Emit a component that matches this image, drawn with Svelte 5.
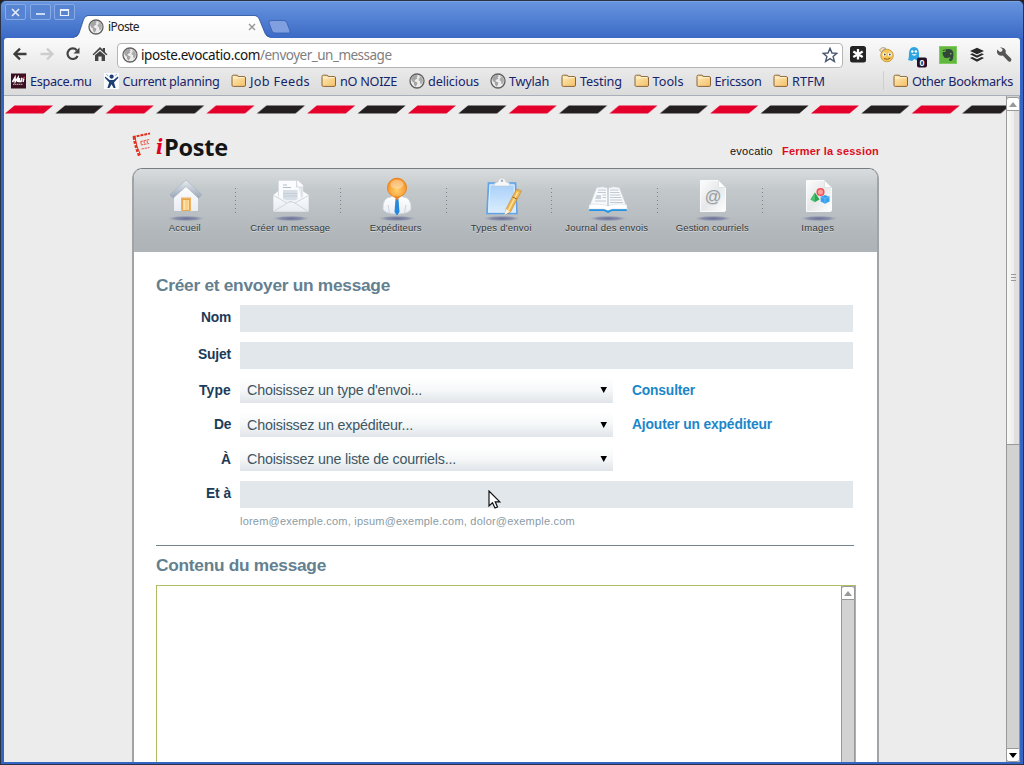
<script>
  // Spreads the letters of a label so that it takes the given width.
  function fit(node, width) {
    const n = [...node.textContent].length;
    const natural = node.getBoundingClientRect().width;
    node.style.letterSpacing = (width - natural) / n + 'px';
  }

  const bookmarks = [
    { icon: 'mu', label: 'Espace.mu', w: 61.5, slot: 92.5 },
    { icon: 'man', label: 'Current planning', w: 97, slot: 127.5 },
    { icon: 'folder', label: 'Job Feeds', w: 60, slot: 90 },
    { icon: 'folder', label: 'nO NOIZE', w: 57, slot: 88 },
    { icon: 'globe', label: 'delicious', w: 51, slot: 81 },
    { icon: 'globe', label: 'Twylah', w: 40, slot: 71 },
    { icon: 'folder', label: 'Testing', w: 42, slot: 72.5 },
    { icon: 'folder', label: 'Tools', w: 31, slot: 62 },
    { icon: 'folder', label: 'Ericsson', w: 47, slot: 77.5 },
    { icon: 'folder', label: 'RTFM', w: 33, slot: 60 }
  ];

  const nav = [
    { icon: 'home', label: 'Accueil', w: 32 },
    { icon: 'mail', label: 'Créer un message', w: 80 },
    { icon: 'person', label: 'Expéditeurs', w: 52 },
    { icon: 'clip', label: "Types d'envoi", w: 61 },
    { icon: 'book', label: 'Journal des envois', w: 83 },
    { icon: 'at', label: 'Gestion courriels', w: 73 },
    { icon: 'shapes', label: 'Images', w: 33 }
  ];

  const selects = [
    { label: 'Type', lw: 32, text: "Choisissez un type d'envoi...", w: 175, link: 'Consulter', kw: 63 },
    { label: 'De', lw: 17, text: 'Choisissez un expéditeur...', w: 166, link: 'Ajouter un expéditeur', kw: 140 },
    { label: 'À', lw: 10, text: 'Choisissez une liste de courriels...', w: 209 }
  ];
</script>

{#snippet globe()}
  <svg width="16" height="16" viewBox="0 0 16 16">
    <circle cx="8" cy="8" r="7" fill="#ececec" stroke="#606060" stroke-width="1.3" />
    <path d="M2 6 L4 3 L7 1.8 L9 3 L7.5 4.2 L8.5 5.4 L7 6.2 L5.4 7.4 L6 8.6 L8.4 9.4 L8 11.6 L6.6 13.8 L5.2 12 L4.8 9.6 L3 8.2Z" fill="#a4a4a4" />
    <path d="M10 3 L12.6 4 L14 6.4 L13.6 9.6 L12 11.6 L11 9.8 L11.2 8.2 L9.6 7.4 L9.8 5.6 L11 5Z" fill="#acacac" />
  </svg>
{/snippet}

{#snippet bmIcon(kind)}
  {#if kind === 'folder'}
    <svg width="16" height="16" viewBox="0 0 16 16">
      <defs><linearGradient id="fold" x1="0" y1="0" x2="1" y2="1"><stop offset="0" stop-color="#fdebb8" /><stop offset="1" stop-color="#f5bf66" /></linearGradient></defs>
      <path d="M1 3.5 Q1 2.2 2.3 2.2 H6 Q7 2.2 7.2 3.6 H13.2 Q14.5 3.6 14.5 5 V12.2 Q14.5 13.4 13.2 13.4 H2.3 Q1 13.4 1 12.2Z" fill="url(#fold)" stroke="#8a6438" stroke-width="1" />
      <path d="M2 5 H6.5 L7.5 4.6 H13.4" fill="none" stroke="#fff6d8" />
    </svg>
  {:else if kind === 'globe'}
    {@render globe()}
  {:else if kind === 'mu'}
    <svg width="16" height="16" viewBox="0 0 16 16">
      <rect x="0" y="0.5" width="15" height="15" fill="#3a1020" />
      <path d="M1.5 9 L4 4.6 L4.2 8.6 L7 4.6 L6.6 9 M8.6 4.8 L7.8 8.4 H10 L11 4.8" stroke="#fff" stroke-width="1.6" fill="none" />
      <path d="M12.8 5.5 L12 9" stroke="#fff" stroke-width="1.5" />
      <path d="M12.3 4.5 H14" stroke="#e33a50" stroke-width="1.4" />
      <path d="M2 11.3 H12" stroke="#b59aa2" stroke-width="1.2" stroke-dasharray="1.5 .5" />
    </svg>
  {:else}
    <svg width="16" height="16" viewBox="0 0 16 16">
      <rect width="15" height="16" fill="#fafcff" />
      <circle cx="7.6" cy="3.6" r="2.1" fill="#1c3e73" />
      <path d="M1.2 3.6 L5.6 7 H9.6 L13.8 3.6 L14.4 4.8 L10 9.4 L11.6 15 H9.6 L7.6 11.2 L5.4 15 H3.4 L5.2 9.4 L0.8 4.8Z" fill="#1c3e73" />
      <path d="M2.6 1.4 L4 2.8 M12.6 1.2 L11.2 2.6" stroke="#5f83b5" />
    </svg>
  {/if}
{/snippet}

{#snippet navIcon(kind)}
  <svg class="navicon" width="44" height="44" viewBox="0 0 44 44">
    <ellipse cx="22" cy="39.5" rx="19" ry="2.8" fill="url(#shade)" />
    {#if kind === 'home'}
      <path d="M10 16 L22 5 L34 16 V31 Q34 32 33 32 H11 Q10 32 10 31Z" fill="url(#paper)" />
      <path d="M22 1 L38 15.8 L34.5 19.3 L22 7.5 L9 19.3 L5.8 15.8Z" fill="url(#roof)" stroke="#a4afbd" stroke-width=".6" />
      <rect x="17" y="18.5" width="10" height="13.2" fill="#f0b160" />
      <rect x="18.7" y="20.4" width="6.6" height="11.2" fill="#ffe3ac" stroke="#e09a3e" stroke-width=".8" />
      <path d="M22.5 21 V31" stroke="#f8cd85" stroke-width="2.5" />
    {:else if kind === 'mail'}
      <path d="M9.5 1.5 H29 L34 6 V22 H9.5Z" fill="#fbfcfd" stroke="#d3d8de" stroke-width=".6" />
      <path d="M27.5 1.5 V8 H33 V22" fill="#e8ecf1" stroke="#c8cfd8" stroke-width=".7" />
      <path d="M14 6 H18 M14 8.5 H22" stroke="#b5bcc7" />
      <rect x="14" y="11" width="14.5" height="10" fill="#d8dee6" />
      <path d="M14 14.5 H28.5 M14 17 H28.5" stroke="#c1c9d4" stroke-width=".8" />
      <path d="M4.5 16 L9 12.5 V18 L21.5 23 L34 18 V12.5 L39.5 16 V31.5 Q39.5 32.5 38.5 32.5 H5.5 Q4.5 32.5 4.5 31.5Z" fill="url(#paper)" stroke="#e8ecf0" stroke-width=".5" />
      <path d="M4.5 16.5 L18 24 M39.5 16.5 L26 24 M5.5 32 L19 23.5 Q22 22 25 23.5 L38.5 32" fill="none" stroke="#cbd2da" stroke-width=".9" />
    {:else if kind === 'person'}
      <path d="M8 30 Q7.5 18.5 16 18 H28 Q36.5 18.5 36 30 Q35 34.5 22 35 Q9 34.5 8 30Z" fill="url(#paper)" stroke="#cdd4df" stroke-width=".7" />
      <path d="M13 26 L14.5 33.5 M31 26 L29.5 33.5" stroke="#cfd6e1" />
      <path d="M16 18 L22 25 L28 18 L25 16 H19Z" fill="#fff" />
      <path d="M20.5 20 H23.5 L24.5 33 L22 36.5 L19.5 33Z" fill="#2688dc" />
      <path d="M18.5 17 L22 21.5 L25.5 17Z" fill="#ef8120" />
      <circle cx="22" cy="8.7" r="9.5" fill="url(#head)" stroke="#e9801c" stroke-width="1" />
      <ellipse cx="22" cy="5.4" rx="6.5" ry="4.5" fill="#fff" opacity=".35" />
    {:else if kind === 'clip'}
      <path d="M8.5 4 H35.5 L37 34.5 H7Z" fill="url(#board)" stroke="#5fa2e6" stroke-width="1.6" />
      <path d="M10 6 H34 L35.3 32.8 H8.6Z" fill="none" stroke="#dceeff" stroke-width="1" />
      <path d="M14 7 Q14 3 18 3 Q18.5 -1 22 -1 Q25.5 -1 26 3 Q30 3 30 7Z" fill="#f6f7f8" stroke="#c5cad0" stroke-width=".6" />
      <circle cx="22" cy="1.8" r="1.2" fill="#a3acb5" />
      <path d="M36.5 10 L41.5 12 L30.5 33 L25 35.5 L26 30Z" fill="#f1b550" stroke="#c08a38" stroke-width=".6" />
      <path d="M38 13 L28.5 31" stroke="#ffe4a4" stroke-width="1.5" />
      <path d="M26 30 L30 32.5 L24.5 36Z" fill="#fff4e0" />
      <path d="M32.5 18 L37 20" stroke="#96651f" />
    {:else if kind === 'book'}
      <path d="M2.5 28 L3.5 32 H18 L22 34 L26 32 H40.5 L41.5 28Z" fill="#2093e4" />
      <path d="M10.5 8.5 Q17 7 22 9 Q27 7 33.5 8.5 L41 28.5 Q30 26.5 22 29.5 Q14 26.5 3 28.5Z" fill="#f7f9fb" stroke="#c6cdd5" stroke-width=".7" />
      <path d="M3.5 25.5 Q14 24 22 27 Q30 24 40.5 25.5 L41.5 30 H26 L22 31.5 L18 30 H2.5Z" fill="#fff" stroke="#c9d0d8" stroke-width=".5" />
      <path d="M22 9 V27" stroke="#bac2cc" stroke-width="1.3" />
      <path d="M12 11 H20 M11.5 13.5 H20 M16.5 16 H20 M16.5 18.5 H20 M9 22 H20 M24 11 H32.5 M24 13.5 H33.5 M24 16 H34.5 M24 18.5 H35.5 M24 21 H36 M24 23.5 H37" stroke="#c3cad4" />
      <path d="M10.5 16 H15 V20 H9.2Z" fill="#ccd3db" />
    {:else}
      <path d="M9.5 1.5 H27.5 L34.5 8.5 V31 Q34.5 32.5 33 32.5 H9.5Z" fill="url(#sheet)" stroke="#f9fafb" stroke-width="1" />
      <path d="M27.5 1.5 V8.5 H34.5Z" fill="#fff" stroke="#dcdfe2" stroke-width=".8" />
      {#if kind === 'at'}
        <text x="22" y="22.5" text-anchor="middle" font-family="Liberation Sans" font-size="16.5" fill="#989da2">@</text>
      {:else}
        <circle cx="23.5" cy="13" r="3.3" fill="#ff9c9c" stroke="#ee5054" stroke-width="1.5" />
        <path d="M18 13.5 L22.5 20.5 L18 23 L13.5 20.5Z" fill="#2da452" />
        <path d="M18 13.5 L18 23 L13.5 20.5Z" fill="#4fc070" />
        <path d="M28 16 L32.5 17.7 V22.5 L28 24.8 L23.7 22.5 V17.7Z" fill="#35a0f2" />
        <path d="M23.7 17.7 L28 19.5 L32.5 17.7 M28 19.5 V24.5" stroke="#79c0f8" fill="none" stroke-width=".7" />
      {/if}
    {/if}
  </svg>
{/snippet}

<svg class="defs" width="0" height="0">
  <defs>
    <linearGradient id="paper" x1="0" y1="0" x2="0" y2="1"><stop offset="0" stop-color="#fff" /><stop offset="1" stop-color="#e9ecf2" /></linearGradient>
    <linearGradient id="sheet" x1="0" y1="0" x2="1" y2="1"><stop offset="0" stop-color="#fdfdfd" /><stop offset=".5" stop-color="#e6e8e9" /><stop offset="1" stop-color="#fff" /></linearGradient>
    <linearGradient id="roof" x1="0" y1="0" x2="0" y2="1"><stop offset="0" stop-color="#e9edf3" /><stop offset="1" stop-color="#98a5b5" /></linearGradient>
    <linearGradient id="board" x1="0" y1="0" x2="0" y2="1"><stop offset="0" stop-color="#a5cef8" /><stop offset="1" stop-color="#dceeff" /></linearGradient>
    <radialGradient id="head" cx=".5" cy=".65"><stop offset="0" stop-color="#ffcf6a" /><stop offset="1" stop-color="#f79a30" /></radialGradient>
    <radialGradient id="shade"><stop offset="0" stop-color="#6a7095" /><stop offset=".6" stop-color="#7f86a5" stop-opacity=".8" /><stop offset="1" stop-color="#a5abb9" stop-opacity="0" /></radialGradient>
  </defs>
</svg>

<div class="window">
  <header class="titlebar">
    <div class="controls">
      <button aria-label="close"><svg width="19" height="15"><path d="M6 4 L13 11 M13 4 L6 11" stroke="#e9effb" stroke-width="1.5" /></svg></button>
      <button aria-label="minimise"><svg width="19" height="15"><path d="M5 9 H14" stroke="#f2f6ff" stroke-width="1.6" /></svg></button>
      <button aria-label="maximise"><svg width="19" height="15"><path d="M5.5 4.5 H13.5 V10.5 H5.5Z M5.5 5.3 H13.5" fill="none" stroke="#e9effb" stroke-width="1.2" /></svg></button>
    </div>
    <div class="tab">
      <svg class="tabshape" width="200" height="23" viewBox="0 0 200 24" preserveAspectRatio="none">
        <defs><linearGradient id="tabg" x1="0" y1="0" x2="0" y2="1"><stop offset="0" stop-color="#fff" /><stop offset="1" stop-color="#f8f8f8" /></linearGradient></defs>
        <path d="M0 23.5 Q3.5 23 5 19 L9.5 5 Q11 .7 15 .7 H180 Q184 .7 185.5 5 L191 19 Q192.5 23 196 23.5 V24 H0Z" fill="url(#tabg)" />
        <path d="M0 23 Q3.5 22.5 5 19 L9.5 5 Q11 .5 15 .5 H180 Q184 .5 185.5 5 L191 19 Q192.5 22.5 196 23" fill="none" stroke="#2c4f97" stroke-width=".8" />
      </svg>
      <div class="tabrow">
        {@render globe()}
        <span class="ubuntu tabname"><span class="fit" use:fit={31}>iPoste</span></span>
        <svg width="8" height="8" class="close"><path d="M1 1 L7 7 M7 1 L1 7" stroke="#9a9a9a" stroke-width="1.5" /></svg>
      </div>
    </div>
    <svg class="newtab" width="26" height="16"><path d="M4 1.5 H17 Q19 1.5 20 4 L23 12 Q23.5 14 21.5 14 H8 Q6 14 5 12 L2 4 Q1.5 1.5 4 1.5Z" fill="#7f9fdf" stroke="#3560b0" stroke-width=".8" /></svg>
  </header>

  <div class="chrome">
    <div class="toolbar">
      <div class="navbtns">
        <svg width="16" height="16" viewBox="0 0 16 16"><path d="M14.5 8 H3 M8 2.7 L2.5 8 L8 13.3" fill="none" stroke="#3d3d3d" stroke-width="2.3" /></svg>
        <svg width="16" height="16" viewBox="0 0 16 16"><path d="M1.5 8 H13 M8 2.7 L13.5 8 L8 13.3" fill="none" stroke="#cdcdcd" stroke-width="2.3" /></svg>
        <svg width="16" height="16" viewBox="0 0 16 16"><path d="M12.6 10 A5.3 5.3 0 1 1 11.8 4.2" fill="none" stroke="#444" stroke-width="2.2" /><path d="M14.5 1.5 V7.5 H8.5Z" fill="#444" /></svg>
        <svg width="16" height="16" viewBox="0 0 16 16"><path d="M8 1 L10.8 3.8 V2 H13 V6 L15.5 8.5 L14.3 9.2 L8 3.6 L1.7 9.2 L.5 8.5Z" fill="#444" /><path d="M3 9.3 L8 4.9 L13 9.3 V15 H9.6 V10.5 H6.4 V15 H3Z" fill="#444" /></svg>
      </div>
      <div class="omnibox ubuntu">
        {@render globe()}
        <span class="url"><span class="fit host" use:fit={119}>iposte.evocatio.com</span><span class="fit" use:fit={131.5}>/envoyer_un_message</span></span>
        <svg width="16" height="16" viewBox="0 0 16 16" class="star"><path d="M8 1.3 L10 6 L14.9 6.3 L11.1 9.5 L12.4 14.5 L8 11.7 L3.6 14.5 L4.9 9.5 L1.1 6.3 L6 6Z" fill="#fff" stroke="#47566f" stroke-width="1.4" /></svg>
      </div>
      <div class="exts">
        <svg width="16" height="17" viewBox="0 0 16 17"><rect width="16" height="16.5" rx="2.5" fill="#242424" /><path d="M8 3 V13.5 M3.3 5.5 L12.7 11 M12.7 5.5 L3.3 11" stroke="#fff" stroke-width="2.3" /></svg>
        <svg width="17" height="17" viewBox="0 0 17 17"><circle cx="9" cy="9.5" r="6.3" fill="#f5c656" stroke="#bf9038" stroke-width=".8" /><path d="M1.5 4 Q4 0 8 2.5 Q5 3 3.5 6.5Z" fill="#efe0ba" stroke="#8b8069" stroke-width=".6" /><ellipse cx="6.5" cy="8.5" rx="1.9" ry="1.9" fill="#fff" /><ellipse cx="11.8" cy="8.5" rx="1.9" ry="1.9" fill="#fff" /><circle cx="6.8" cy="8.5" r=".9" fill="#444" /><circle cx="11.8" cy="8.5" r=".9" fill="#444" /><path d="M6 12.5 Q9.5 14.5 12.5 12" stroke="#8e5a18" fill="none" /></svg>
        <svg class="ghost" width="20" height="22" viewBox="0 0 20 22"><path d="M2 8 Q2 1 7 1 Q12 1 12 8 V12.5 L10 14.5 L7.5 13 L5 15 L1 14 Q2 12 2 8Z" fill="#2ea5e3" /><circle cx="5.3" cy="5.5" r="1.2" fill="#fff" /><circle cx="8.9" cy="5.5" r="1.2" fill="#fff" /><path d="M4.5 8.3 Q7 11 10 8.3Z" fill="#fff" /><rect x="10" y="11.5" width="10" height="10" rx="2" fill="#241029" /><text x="15" y="19.8" text-anchor="middle" font-family="Liberation Sans" font-weight="700" font-size="9" fill="#fff">0</text></svg>
        <svg width="18" height="18" viewBox="0 0 18 18"><rect x=".5" y=".5" width="17" height="17" fill="#62b73e" stroke="#82c964" /><path d="M3.5 6 H6.5 V3.2 Q11 2.5 13 4 Q15 6 14.2 11 Q13.8 15.5 11 15 Q9.5 14.5 10 12.8 H11.5 Q11 10.8 9.5 11.5 Q8 12.5 5.3 11.5 Q3.5 10 3.5 6Z" fill="#33463a" /><path d="M3.5 5 L5.5 3 V5Z" fill="#33463a" /><circle cx="11.8" cy="7.8" r=".8" fill="#8ccf72" /></svg>
        <svg width="16" height="16" viewBox="0 0 16 16"><path d="M8 .8 L15 4 L8 7.2 L1 4Z M1 7.3 L3.3 6.3 L8 8.5 L12.7 6.3 L15 7.3 L8 10.7Z M1 11 L3.3 10 L8 12.2 L12.7 10 L15 11 L8 14.8Z" fill="#292929" /></svg>
        <svg width="16" height="16" viewBox="0 0 16 16"><path d="M1 2.5 L4 5 L6.2 4.3 L6.5 2 L4 .6 Q8 -.3 9.5 3 Q10 4.8 9.5 6 L15 11.5 Q15.8 13 14.8 14.2 Q13.3 15.3 12 14 L6.8 8.5 Q2.5 9.5 1 5.5Z" fill="#555" /></svg>
      </div>
    </div>
    <nav class="bookmarks ubuntu">
      {#each bookmarks as b}
        <a class="bm" style:width="{b.slot}px">{@render bmIcon(b.icon)}<span class="fit" use:fit={b.w}>{b.label}</span></a>
      {/each}
      <a class="bm other">{@render bmIcon('folder')}<span class="fit" use:fit={101}>Other Bookmarks</span></a>
    </nav>
  </div>

  <div class="viewport">
    <main class="page">
      <svg class="stripes" width="1002" height="9">
        <defs>
          <pattern id="airmail" x="1" y="0" width="100.75" height="9" patternUnits="userSpaceOnUse">
            <path d="M0 8.5 L9.5 .5 H48 L38.5 8.5Z" fill="#e4002b" />
            <path d="M50.4 8.5 L60 .5 H98.4 L89 8.5Z" fill="#231f20" />
          </pattern>
        </defs>
        <rect width="1002" height="9" fill="url(#airmail)" />
      </svg>

      <div class="site">
        <div class="masthead">
          <div class="logo">
            <svg width="22" height="26" viewBox="0 0 22 26">
              <path d="M.8 5 L18 1.5" stroke="#e0301e" stroke-width="2" stroke-dasharray="3 .9" fill="none" />
              <path d="M2 5 Q3 14 7.5 24.5" stroke="#e0301e" stroke-width="2.6" stroke-dasharray="2.8 1.4" fill="none" />
              <path d="M3 5 Q4 14 8.5 23" stroke="#e0301e" stroke-width="1" fill="none" />
              <path d="M8.5 9.5 L17.5 7.5 M9 13 L17 11.5 M9 9.5 V13 M12 9 L12.5 12.5 M15 8.5 L15.5 11.5 M9.5 17 L17.5 15.5" stroke="#e5584a" stroke-width="1" stroke-dasharray="2.5 .7" />
            </svg>
            <span class="brand"><i>i</i><span class="fit" use:fit={64}>Poste</span></span>
          </div>
          <div class="session"><span class="fit" use:fit={43}>evocatio</span><a class="fit out" use:fit={97}>Fermer la session</a></div>
        </div>

        <div class="panel">
          <ul class="mainnav">
            {#each nav as n}
              <li>{@render navIcon(n.icon)}<span class="fit" use:fit={n.w}>{n.label}</span></li>
            {/each}
          </ul>

          <form>
            <h2><span class="fit" use:fit={234}>Créer et envoyer un message</span></h2>
            <div class="row tall"><label for="nom"><span class="fit" use:fit={30}>Nom</span></label><div class="input" id="nom"></div></div>
            <div class="row tall"><label for="sujet"><span class="fit" use:fit={33}>Sujet</span></label><div class="input" id="sujet"></div></div>
            {#each selects as s}
              <div class="row short">
                <label for={s.label}><span class="fit" use:fit={s.lw}>{s.label}</span></label>
                <div class="select" id={s.label}>
                  <span class="fit" use:fit={s.w}>{s.text}</span>
                  <svg width="8" height="8"><path d="M.5 1 H7 L3.7 7Z" fill="#000" /></svg>
                </div>
                {#if s.link}<a class="link"><span class="fit" use:fit={s.kw}>{s.link}</span></a>{/if}
              </div>
            {/each}
            <div class="row last"><label for="eta"><span class="fit" use:fit={25}>Et à</span></label><div class="input" id="eta"></div></div>
            <p class="hint"><span class="fit" use:fit={335}>lorem@exemple.com, ipsum@exemple.com, dolor@exemple.com</span></p>
            <hr />
            <h2 class="second"><span class="fit" use:fit={170}>Contenu du message</span></h2>
            <div class="editor">
              <div class="innerbar"><div class="sbtn"><svg width="8" height="5"><path d="M0 5 L4 0 L8 5Z" fill="#999" /></svg></div></div>
            </div>
          </form>
        </div>
      </div>
    </main>
    <div class="scrollbar">
      <div class="sbtn"><svg width="8" height="5"><path d="M0 5 L4 0 L8 5Z" fill="#999" /></svg></div>
      <div class="thumb"><i></i><i></i><i></i></div>
      <div class="track"></div>
      <div class="sbtn down"><svg width="8" height="5"><path d="M0 0 L4 5 L8 0Z" fill="#000" /></svg></div>
    </div>
  </div>
</div>

<svg class="cursor" width="13" height="19" viewBox="0 0 13 19"><path d="M1 1 V16 L4.5 12.8 L7 18 L9.5 17 L7.2 11.8 H11.8Z" fill="#fff" stroke="#111" stroke-width="1.2" /></svg>

<style>
  :global(body) { margin: 0; overflow: hidden; background: #222; }
  .defs { position: absolute; }
  svg { display: block; flex: none; }
  .navicon { overflow: visible; margin-left: -2px; }
  .fit { display: inline-block; white-space: nowrap; }
  .ubuntu { font-family: "Noto Sans", "Open Sans", sans-serif; }

  .window {
    box-sizing: border-box; width: 1024px; height: 765px; display: flex; flex-direction: column;
    background: #3465c4; border: 1px solid #2b3346; border-radius: 6px 6px 0 0;
    padding: 0 3px 2px; font-family: "Liberation Sans", Arial, sans-serif; overflow: hidden;
  }
  .titlebar {
    flex: none; height: 37px; margin: 0 -3px; display: flex; box-sizing: border-box;
    background: linear-gradient(#6794de, #3b6ac6); border-top: 1px solid #7ba3e4;
  }
  .controls { display: flex; gap: 3.5px; padding: 2px 0 0 4px; width: 73px; box-sizing: border-box; }
  button {
    box-sizing: border-box; width: 21px; height: 16px; padding: 0; display: flex; align-items: center; justify-content: center;
    background: #5684d3; border: 1px solid #88abe8; border-radius: 2px; flex: none;
  }
  .tab { display: grid; width: 193px; height: 23px; margin-top: 13px; }
  .tabshape, .tabrow { grid-area: 1 / 1; }
  .tabrow { display: flex; align-items: center; padding-left: 14px; box-sizing: border-box; width: 193px; height: 23px; }
  .tabname { font-size: 12px; line-height: 20px; color: #222; margin-left: 4px; flex: 1; }
  .close { margin-right: 11px; }
  .newtab { margin-top: 17px; }

  .chrome { flex: none; height: 58px; background: linear-gradient(#fafafa, #dbdbdb); border-bottom: 1px solid #a9afba; box-sizing: border-box; border-radius: 3px 3px 0 0; }
  .toolbar { display: flex; height: 32px; align-items: center; padding-left: 8px; box-sizing: border-box; }
  .navbtns { display: flex; gap: 10.5px; width: 105px; flex: none; }
  .omnibox {
    box-sizing: border-box; width: 726px; flex: none; height: 25px; border: 1px solid #b5b5b5; border-radius: 4px; background: #fff;
    display: flex; align-items: center; padding: 0 4px; margin-top: 2px;
  }
  .url { flex: 1; margin-left: 3px; font-size: 13.5px; line-height: 22px; color: #808080; display: flex; }
  .host { color: #151515; }
  .exts { display: flex; align-items: center; gap: 11.9px; margin-left: 7px; margin-top: 1px; }
  .ghost { margin-top: 4px; }
  .bookmarks { display: flex; height: 21px; align-items: center; padding-left: 7px; font-size: 12.7px; color: #17246b; }
  .bm { display: flex; align-items: center; gap: 3px; flex: none; line-height: 20px; }
  .other { margin-left: auto; padding-left: 9px; margin-right: 7px; border-left: 1px solid #c9ced9; height: 19px; }

  .viewport { flex: 1; min-height: 0; display: flex; background: #ececec; }
  .page { flex: 1; min-width: 0; overflow: hidden; display: flex; flex-direction: column; }
  .stripes { margin-top: 9px; flex: none; }
  .site { width: 747px; margin: 0 0 0 128px; }
  .masthead { display: flex; justify-content: space-between; height: 54px; }
  .logo { display: flex; padding-top: 18px; }
  .brand { font: 700 23.5px/32px "Open Sans", sans-serif; color: #151515; margin: -1px 0 0 2px; display: flex; }
  .brand i { color: #e2001f; font-family: "DejaVu Serif", serif; font-size: 21px; width: 8px; transform: scaleX(.9); transform-origin: left; }
  .session { display: flex; gap: 9px; font-size: 11px; line-height: 14px; padding-top: 30px; color: #111; }
  .out { color: #dd0d24; font-weight: 700; }

  .panel {
    box-sizing: border-box; width: 747px; height: 640px; background: #fff; border: 2px solid #a0a4a6; border-width: 1px 2px 0;
    border-top-color: #777d80; border-radius: 10px 10px 0 0; overflow: hidden;
  }
  .mainnav {
    list-style: none; margin: 0; padding: 0; height: 83px; display: flex; overflow: hidden;
    background: linear-gradient(#d8dcdf, #c3c8cb 25%, #b0b6ba 80%, #adb3b7);
  }
  li {
    box-sizing: border-box; width: 105.5px; flex: none; display: flex; flex-direction: column; align-items: center;
    padding-top: 10px; font-size: 9.5px; line-height: 12px; color: #353839; text-shadow: 0 1px 0 #d5dadd;
    background: repeating-linear-gradient(#7c8287 0 1px, transparent 1px 4px) 100.5px 19px / 1px 25px no-repeat;
  }
  li:last-child { background: none; }
  li > span { margin: -1px 0 0 -4px; }

  form { padding: 21px 0 0 22px; width: 700px; }
  h2 { margin: 0; font-size: 17.3px; line-height: 24px; color: #64808f; height: 32px; }
  .row { display: flex; align-items: flex-start; }
  .row label { width: 75px; margin-right: 9px; text-align: right; font-size: 13.8px; font-weight: 700; color: #1b3b59; line-height: 26px; }
  .tall { height: 36.5px; }
  .short { height: 34.4px; }
  .last { height: 31px; }
  .input { width: 613px; height: 27px; background: #e1e7ea; }
  .select {
    box-sizing: border-box; width: 373px; height: 24.5px; padding: 0 5px 0 7px; display: flex; align-items: center; justify-content: space-between;
    font-size: 14.3px; color: #405663; background: linear-gradient(#fff, #f5f7f8 50%, #e0e5e9);
  }
  .link { margin-left: 19px; font-size: 13.8px; line-height: 26px; font-weight: 700; color: #1c86c8; }
  .hint { margin: 0 0 0 84px; font-size: 11px; line-height: 18px; color: #8a9ba5; height: 33px; }
  hr { margin: 0; border: 0; height: 1px; width: 698px; background: #72858d; }
  .second { height: 39px; padding-top: 7px; box-sizing: border-box; }
  .editor { box-sizing: border-box; width: 700px; height: 300px; border: 1px solid #b0bb62; display: flex; justify-content: flex-end; }
  .innerbar { width: 12px; border: 1px solid #999; border-top: 0; background: #d2d2d2; }
  .sbtn { height: 12px; background: #fff; border: 1px solid #999; border-radius: 3px 3px 0 0; margin: 0 -1px; display: flex; align-items: center; justify-content: center; flex: none; }

  .scrollbar { width: 14px; flex: none; display: flex; flex-direction: column; background: #d2d2d2; box-sizing: border-box; border: 1px solid #999; border-width: 0 1px; }
  .scrollbar .sbtn { margin-top: 1px; }
  .thumb { height: 333px; border-bottom: 1px solid #999; background: linear-gradient(90deg, #f8f8f8, #ededed 55%, #e0dfdd 60%); display: flex; flex-direction: column; align-items: center; justify-content: center; gap: 2px; }
  .thumb i { width: 5px; height: 1px; background: #999; }
  .track { flex: 1; }
  .scrollbar .down { border-radius: 0 0 3px 3px; margin-top: 0; }

  .cursor { position: absolute; left: 488px; top: 490px; }
</style>
